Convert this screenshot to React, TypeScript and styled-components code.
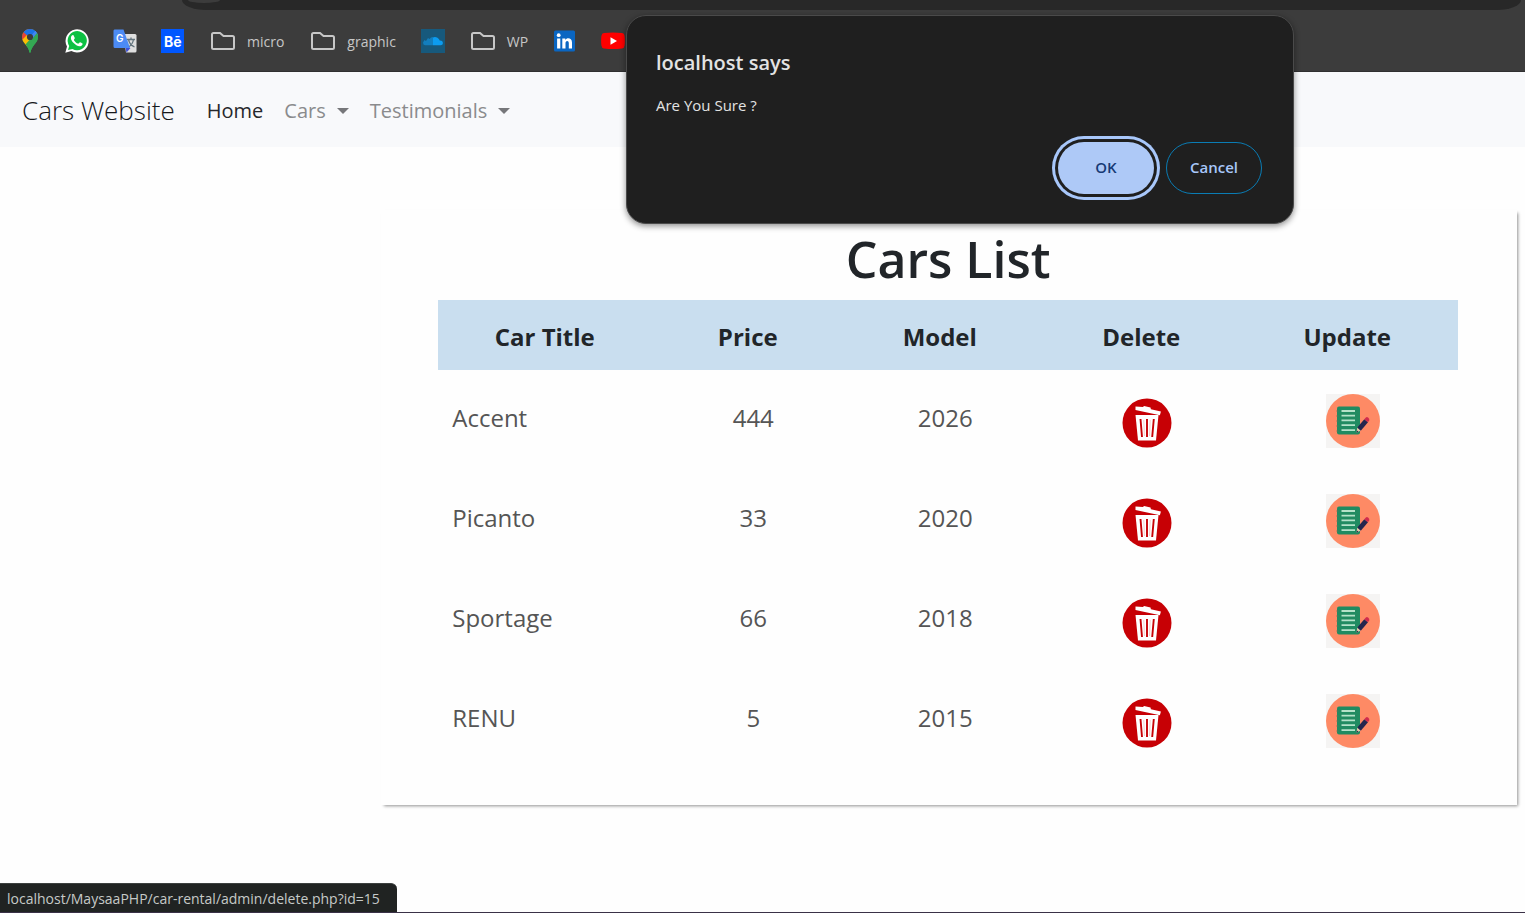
import React from "react";
import styled, { createGlobalStyle } from "styled-components";

const GlobalStyle = createGlobalStyle`
  *, *::before, *::after { box-sizing: border-box; }
  body {
    margin: 0;
    background: #fefefe;
    color: #212529;
    font-family: "Open Sans", "Noto Sans", sans-serif;
  }
  a { color: inherit; text-decoration: none; }
  button { font-family: inherit; cursor: pointer; }
`;

const Page = styled.div`
  min-height: 100vh;
  border-bottom: 1px solid #3a3147;
`;

/* Browser chrome */

const Chrome = styled.header`
  background: #3c3c3c;
  border-bottom: 1px solid #303030;
`;

const AddressStrip = styled.div`
  height: 10px;
  padding: 0 4px 0 182px;
  overflow: hidden;
`;

const AddressPill = styled.div`
  height: 10px;
  padding-left: 6px;
  overflow: hidden;
  background: #282828;
  border-radius: 0 0 24px 24px / 0 0 10px 10px;
`;

const SiteInfoDot = styled.div`
  width: 32px;
  height: 3px;
  background: #3c3c3c;
  border-radius: 0 0 16px 16px / 0 0 3px 3px;
`;

const BookmarkList = styled.ul`
  display: flex;
  align-items: center;
  gap: 24px;
  height: 61px;
  margin: 0;
  padding: 0 17px;
  list-style: none;
`;

const BookmarkLink = styled.a`
  display: flex;
  align-items: center;
  gap: 10px;
  color: #c7c7c7;
  font-size: 14px;
  line-height: 20px;

  svg { display: block; }
`;

const BookmarkLabel = styled.span`
  padding: 2px 1px 0 0;
`;

/* Site navigation */

const Navbar = styled.nav`
  display: flex;
  align-items: center;
  height: 75px;
  padding: 0 22px;
  background: #f8f9fb;
`;

const Brand = styled.a`
  margin-right: 32px;
  color: #16181b;
  font-size: 26px;
  font-weight: 300;
  line-height: 40px;
`;

const NavList = styled.ul`
  display: flex;
  gap: 21px;
  margin: 0;
  padding: 2px 0 0;
  list-style: none;
`;

const NavLink = styled.a<{ $active?: boolean }>`
  display: flex;
  align-items: center;
  gap: 11px;
  color: ${(p) => (p.$active ? "#26282b" : "#8a8b8d")};
  font-size: 20px;
  font-weight: 400;
  line-height: 32px;
`;

const Caret = styled.span`
  border-top: 6px solid #76777a;
  border-left: 6px solid transparent;
  border-right: 6px solid transparent;
`;

/* Cars table */

const Card = styled.main`
  margin: 63px 8px 106px 25%;
  padding: 17px 59px 35px 57px;
  background: #fefefe;
  box-shadow: 2px 2px 3px -1px #909090;
`;

const Title = styled.h1`
  margin: 0 0 9px;
  font-size: 50px;
  font-weight: 600;
  line-height: 64px;
  text-align: center;
`;

const Table = styled.table`
  width: 100%;
  table-layout: fixed;
  border-collapse: collapse;
`;

const Col = styled.col<{ $width: number }>`
  width: ${(p) => p.$width}px;
`;

const HeadCell = styled.th`
  height: 70px;
  padding: 4px 11px 0 0;
  background: #c9deef;
  font-size: 24px;
  font-weight: 700;
  line-height: 36px;
`;

const Cell = styled.td`
  height: 100px;
  padding: 0 0 4px;
  color: #555555;
  font-size: 24px;
  font-weight: 400;
  line-height: 36px;
  text-align: center;
`;

const TitleCell = styled(Cell)`
  padding-left: 14px;
  text-align: left;
`;

const IconCell = styled(Cell)`
  padding: 2px 0 0;
`;

const IconLink = styled.a`
  display: inline-block;
  vertical-align: middle;

  svg { display: block; }
`;

/* Confirmation dialog and link status */

const Dialog = styled.section`
  position: absolute;
  top: 15px;
  left: 626px;
  width: 668px;
  padding: 32px 31px 29px 29px;
  background: #1f1f1f;
  border: 1px solid #4a4a4a;
  border-radius: 20px;
  box-shadow: 0 2px 6px rgba(0, 0, 0, 0.45);
`;

const DialogTitle = styled.h2`
  margin: 0 0 16px;
  color: #e3e3e3;
  font-size: 20px;
  font-weight: 600;
  line-height: 30px;
`;

const DialogText = styled.p`
  margin: 0 0 26px;
  color: #e3e3e3;
  font-size: 15px;
  line-height: 22px;
`;

const DialogActions = styled.div`
  display: flex;
  justify-content: flex-end;
  gap: 12px;
`;

const DialogButton = styled.button<{ $primary?: boolean }>`
  width: 96px;
  height: 52px;
  padding: 0 0 2px;
  border: ${(p) => (p.$primary ? "0" : "1px solid #0a7cb4")};
  border-radius: 26px;
  background: ${(p) => (p.$primary ? "#aec9f7" : "transparent")};
  box-shadow: ${(p) => (p.$primary ? "0 0 0 3px #1f1f1f, 0 0 0 6px #a8c7fa" : "none")};
  color: ${(p) => (p.$primary ? "#173a75" : "#a8c7fa")};
  font-size: 15px;
  font-weight: 600;
`;

const StatusBubble = styled.div`
  position: fixed;
  left: 0;
  bottom: 1px;
  padding: 4px 17px 3px 7px;
  background: #202322;
  border-top: 1px solid #3c403f;
  border-radius: 0 6px 0 0;
  color: #c6cac8;
  font-size: 14px;
  line-height: 21px;
`;

const MapsIcon = () => (
  <svg width="24" height="24" viewBox="-1 0 24 24" aria-hidden="true">
    <defs>
      <clipPath id="pin">
        <path d="M12 0a8 8 0 0 0-8 8c0 3.400 1.700 5.200 3.800 7.800C10 18.600 10.800 20.500 11.300 22.800c.2 1.200 1.200 1.200 1.400 0 .5-2.300 1.300-4.200 3.500-7C18.300 13.200 20 11.400 20 8a8 8 0 0 0-8-8z" />
      </clipPath>
    </defs>
    <g clipPath="url(#pin)">
      <rect width="24" height="24" fill="#34a853" />
      <path d="M0 18 18 -3H0z" fill="#ea4335" />
      <path d="M5.500 3.300 12 8.800 20 0H7z" fill="#1a73e8" />
      <path d="M11 9.500 20 -1v7l-6 6z" fill="#4285f4" />
      <path d="M3 12 9 6l6 5-8 9z" fill="#fbbc04" />
      <path d="M7 16 17.500 4H24v20H7z" fill="#34a853" />
      <path d="M12 8 19 0v4l-5 6z" fill="#4285f4" />
    </g>
    <circle cx="12" cy="8" r="3.100" fill="#3c3c3c" />
  </svg>
);

const WhatsAppIcon = () => (
  <svg width="24" height="24" viewBox="0 0 24 24" aria-hidden="true">
    <path d="M.3 23.700 2 17.600A11.600 11.600 0 1 1 6.400 22z" fill="#fff" />
    <path d="M3 21l1.200-4.100A9.600 9.600 0 1 1 7.500 20z" fill="#0dc143" />
    <path
      d="M8.600 6.400c-.3-.6-1.200-.5-1.700.1-2 2.200-.6 5.100 1.500 7.300 2.400 2.500 5.600 4.500 8 3 1-.6 1.500-1.900 1.100-2.300-.6-.5-1.700-1.100-2.300-1.300-.8-.2-1.200 1.200-1.700 1.400-.7.200-2-.6-3.100-1.600-.8-.8-1.500-1.700-1.500-2.200 0-.6 1-1 .9-1.800z"
      fill="#fff"
    />
  </svg>
);

const TranslateIcon = () => (
  <svg width="24" height="24" viewBox="0 0 24 24" aria-hidden="true">
    <path d="M10 5h12a1.500 1.500 0 0 1 1.500 1.500v15.500a1.500 1.500 0 0 1-1.500 1.500H13z" fill="#dfdfdf" />
    <path d="M12.500 19h5l-4 4.500z" fill="#3f51d8" />
    <path d="M14 10.500h8M18 8.500v2M15.500 10.500c.7 3.500 3 6.200 6 7.500M20.500 10.500c-.6 3.500-2.500 6-5 7.500" fill="none" stroke="#63747e" strokeWidth="1.300" />
    <path d="M1.500.5h9l6.500 18.500H2A1.500 1.500 0 0 1 .5 17.500V2A1.500 1.500 0 0 1 1.500.5z" fill="#4c8bf5" />
    <text x="3" y="13" fill="#fff" fontFamily="Inter" fontWeight="600" fontSize="10">G</text>
  </svg>
);

const BehanceIcon = () => (
  <svg width="24" height="24" viewBox="0 0 24 24" aria-hidden="true">
    <rect width="23" height="24" fill="#0057ff" />
    <text x="3" y="18" fill="#fff" fontFamily="Inter" fontWeight="700" fontSize="14">Bē</text>
  </svg>
);

const FolderIcon = () => (
  <svg width="28" height="24" viewBox="0 0 28 24" aria-hidden="true">
    <path
      d="M4.500 4h6.500l3.500 3h9q1.500 0 1.500 1.500v10q0 1.500-1.500 1.500h-19Q3 20 3 18.500v-13Q3 4 4.500 4z"
      fill="none"
      stroke="#c7c7c7"
      strokeWidth="2"
    />
  </svg>
);

const SoundCloudIcon = () => (
  <svg width="24" height="24" viewBox="0 0 24 24" aria-hidden="true">
    <rect width="24" height="24" fill="#17597c" />
    <path d="M2 13.500 3.500 11 5 12l2-3 1.500 1L10 8.500l2-.5v8.300H4Q2 16 2 13.500z" fill="#137ebd" />
    <path d="M12 8.500q2-1.200 4.500.2Q18.500 10 18.700 11.600q3-.2 3.300 2.300-.2 2.300-2.400 2.400H12z" fill="#0c9cf0" />
  </svg>
);

const LinkedInIcon = () => (
  <svg width="24" height="24" viewBox="0 0 24 24" aria-hidden="true">
    <rect x="1" y="1.500" width="21" height="21" rx="1.500" fill="#0a66c2" />
    <circle cx="5.700" cy="6.200" r="1.900" fill="#fff" />
    <path d="M4.100 9.500h3.200v10H4.100zM9.300 9.500h3v1.400c1.500-2.600 6.700-2.300 6.700 2.700v5.900h-3.200v-5.200c0-3.300-3.300-2.900-3.300 0v5.200H9.300z" fill="#fff" />
  </svg>
);

const YouTubeIcon = () => (
  <svg width="24" height="24" viewBox="0 0 24 24" aria-hidden="true">
    <path d="M3 4Q12 3 21 4q2.300.2 2.600 3 .6 5 0 9.500-.3 2.700-2.600 3-9 1-18 0-2.300-.3-2.600-3Q-.2 12 .4 7 .7 4.200 3 4z" fill="#f00" />
    <path d="M9.500 8.300v7.400L16 12z" fill="#fff" />
  </svg>
);

const TrashIcon = () => (
  <svg width="54" height="54" viewBox="0 0 54 54" aria-hidden="true">
    <circle cx="27" cy="29" r="24.500" fill="#c70005" />
    <path d="M15.500 12.500l7.500.4 1-1 6.500 1.700.4 1.600 10 2.400-1 3.700L15.500 16z" fill="#fff" />
    <path d="M15.500 21h23L36 46.500H18z" fill="#fff" />
    <path d="M20.500 25l1.500 18M27 25v18M33.800 25l-1.600 18" stroke="#c70005" strokeWidth="1.900" fill="none" />
    <path d="M23.800 26l.6 16M30.200 26l-.6 16" stroke="#f3cccc" strokeWidth="1" fill="none" />
  </svg>
);

const EditIcon = () => (
  <svg width="54" height="54" viewBox="0 0 54 54" aria-hidden="true">
    <rect width="54" height="54" fill="#f5f4f3" />
    <circle cx="27" cy="27" r="27" fill="#fe8a65" />
    <rect x="11" y="12.500" width="23" height="28" rx="2" fill="#218b61" />
    <path d="M15.500 17h13.500M15.500 21.700h13.500M15.500 26.400h13.500M15.500 31.100h13.500M15.500 36.200h13.500" stroke="#b4e2c9" strokeWidth="1.800" />
    <path d="M10.500 17h2M10.500 22h2M10.500 27h2M10.500 32h2M10.500 37h2" stroke="#66705a" strokeWidth="1.200" />
    <path d="M30.500 38.800 31.300 33.600 34.800 36.600z" fill="#e8c9a8" />
    <path d="M30.500 38.800l.4-2.300 1.600 1.300z" fill="#25264e" />
    <path d="M31.300 33.600 38.300 25.200 42 28.300 34.800 36.700z" fill="#25264e" />
    <path d="M38.300 25.200l1.600-1.700q1-.9 2.400.2 1.500 1.200.9 2.600L42 28.300z" fill="#d02b4e" />
  </svg>
);

const bookmarks = [
  { name: "Google Maps", Icon: MapsIcon },
  { name: "WhatsApp", Icon: WhatsAppIcon },
  { name: "Google Translate", Icon: TranslateIcon },
  { name: "Behance", Icon: BehanceIcon },
  { name: "micro", Icon: FolderIcon, label: "micro" },
  { name: "graphic", Icon: FolderIcon, label: "graphic" },
  { name: "SoundCloud", Icon: SoundCloudIcon },
  { name: "WP", Icon: FolderIcon, label: "WP" },
  { name: "LinkedIn", Icon: LinkedInIcon },
  { name: "YouTube", Icon: YouTubeIcon },
];

const columns = [
  { name: "Car Title", width: 224 },
  { name: "Price", width: 182 },
  { name: "Model", width: 202 },
  { name: "Delete", width: 201 },
  { name: "Update", width: 211 },
];

const cars = [
  { title: "Accent", price: 444, model: 2026 },
  { title: "Picanto", price: 33, model: 2020 },
  { title: "Sportage", price: 66, model: 2018 },
  { title: "RENU", price: 5, model: 2015 },
];

export default function App() {
  return (
    <Page>
      <GlobalStyle />
      <Chrome>
        <AddressStrip>
          <AddressPill>
            <SiteInfoDot />
          </AddressPill>
        </AddressStrip>
        <BookmarkList>
          {bookmarks.map(({ name, Icon, label }) => (
            <li key={name}>
              <BookmarkLink href="#" aria-label={name}>
                <Icon />
                {label && <BookmarkLabel>{label}</BookmarkLabel>}
              </BookmarkLink>
            </li>
          ))}
        </BookmarkList>
      </Chrome>

      <Navbar>
        <Brand href="#">Cars Website</Brand>
        <NavList>
          <li><NavLink href="#" $active>Home</NavLink></li>
          <li><NavLink href="#">Cars<Caret /></NavLink></li>
          <li><NavLink href="#">Testimonials<Caret /></NavLink></li>
        </NavList>
      </Navbar>

      <Card>
        <Title>Cars List</Title>
        <Table>
          <colgroup>
            {columns.map((c) => <Col key={c.name} $width={c.width} />)}
          </colgroup>
          <thead>
            <tr>
              {columns.map((c) => <HeadCell key={c.name} scope="col">{c.name}</HeadCell>)}
            </tr>
          </thead>
          <tbody>
            {cars.map((car) => (
              <tr key={car.title}>
                <TitleCell>{car.title}</TitleCell>
                <Cell>{car.price}</Cell>
                <Cell>{car.model}</Cell>
                <IconCell>
                  <IconLink href="#" aria-label={`Delete ${car.title}`}><TrashIcon /></IconLink>
                </IconCell>
                <IconCell>
                  <IconLink href="#" aria-label={`Update ${car.title}`}><EditIcon /></IconLink>
                </IconCell>
              </tr>
            ))}
          </tbody>
        </Table>
      </Card>

      <Dialog role="alertdialog" aria-labelledby="dialog-title" aria-describedby="dialog-text">
        <DialogTitle id="dialog-title">localhost says</DialogTitle>
        <DialogText id="dialog-text">Are You Sure ?</DialogText>
        <DialogActions>
          <DialogButton type="button" $primary>OK</DialogButton>
          <DialogButton type="button">Cancel</DialogButton>
        </DialogActions>
      </Dialog>

      <StatusBubble>localhost/MaysaaPHP/car-rental/admin/delete.php?id=15</StatusBubble>
    </Page>
  );
}
